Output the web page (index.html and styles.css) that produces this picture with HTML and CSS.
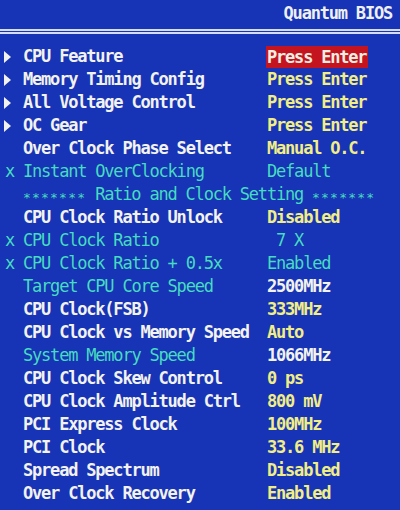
FILE: index.html
```html
<!DOCTYPE html>
<html>
<head>
<meta charset="utf-8">
<link rel="stylesheet" href="styles.css">
</head>
<body>
<div class="screen">
  <header class="topbar">
    <span class="brand">Quantum BIOS</span>
  </header>
  <div class="rule"></div>
  <ul class="menu">
    <li class="row"><span class="mark arrow"></span><span class="label">CPU Feature</span><span class="value sel">Press Enter</span></li>
    <li class="row"><span class="mark arrow"></span><span class="label">Memory Timing Config</span><span class="value">Press Enter</span></li>
    <li class="row"><span class="mark arrow"></span><span class="label">All Voltage Control</span><span class="value">Press Enter</span></li>
    <li class="row"><span class="mark arrow"></span><span class="label">OC Gear</span><span class="value">Press Enter</span></li>
    <li class="row"><span class="mark"></span><span class="label">Over Clock Phase Select</span><span class="value">Manual O.C.</span></li>
    <li class="row dim"><span class="mark">x</span><span class="label">Instant OverClocking</span><span class="value">Default</span></li>
    <li class="row dim"><span class="mark"></span><span class="section"><span class="stars">*******</span> Ratio and Clock Setting <span class="stars">*******</span></span></li>
    <li class="row"><span class="mark"></span><span class="label">CPU Clock Ratio Unlock</span><span class="value">Disabled</span></li>
    <li class="row dim"><span class="mark">x</span><span class="label">CPU Clock Ratio</span><span class="value indent">7 X</span></li>
    <li class="row dim"><span class="mark">x</span><span class="label">CPU Clock Ratio + 0.5x</span><span class="value">Enabled</span></li>
    <li class="row info"><span class="mark"></span><span class="label">Target CPU Core Speed</span><span class="value">2500MHz</span></li>
    <li class="row"><span class="mark"></span><span class="label">CPU Clock(FSB)</span><span class="value">333MHz</span></li>
    <li class="row"><span class="mark"></span><span class="label">CPU Clock vs Memory Speed</span><span class="value">Auto</span></li>
    <li class="row info"><span class="mark"></span><span class="label">System Memory Speed</span><span class="value">1066MHz</span></li>
    <li class="row"><span class="mark"></span><span class="label">CPU Clock Skew Control</span><span class="value">0 ps</span></li>
    <li class="row"><span class="mark"></span><span class="label">CPU Clock Amplitude Ctrl</span><span class="value">800 mV</span></li>
    <li class="row"><span class="mark"></span><span class="label">PCI Express Clock</span><span class="value">100MHz</span></li>
    <li class="row"><span class="mark"></span><span class="label">PCI Clock</span><span class="value">33.6 MHz</span></li>
    <li class="row"><span class="mark"></span><span class="label">Spread Spectrum</span><span class="value">Disabled</span></li>
    <li class="row"><span class="mark"></span><span class="label">Over Clock Recovery</span><span class="value">Enabled</span></li>
  </ul>
</div>
</body>
</html>
```
FILE: styles.css
```css
html, body {
  margin: 0;
  padding: 0;
  background: #1733b6;
}

.screen {
  width: 400px;
  height: 510px;
  overflow: hidden;
  background: #1733b6;
  font-family: "DejaVu Sans Mono", "Liberation Mono", monospace;
  font-weight: bold;
  font-size: 17px;
  letter-spacing: -1.2px;
  color: #f2f2ee;
}

.topbar {
  height: 29px;
  display: flex;
  justify-content: flex-end;
  align-items: center;
  padding-right: 8px;
  box-sizing: border-box;
}

.brand {
  color: #eef0f4;
  padding-bottom: 3px;
}

.rule {
  height: 0;
  border-top: 5px double #d6dcf2;
}

.menu {
  list-style: none;
  margin: 0;
  padding: 11px 0 0 0;
}

.row {
  display: grid;
  grid-template-columns: 23px 244px 1fr;
  align-items: center;
  height: 23px;
  line-height: 23px;
  white-space: pre;
}

.mark {
  display: flex;
  align-items: center;
  justify-content: center;
  height: 23px;
  color: #46dcc0;
  font-weight: normal;
  padding-right: 4px;
}

.arrow::before {
  content: "";
  display: block;
  width: 0;
  height: 0;
  border-top: 6px solid transparent;
  border-bottom: 6px solid transparent;
  border-left: 7px solid #f2f2ee;
  margin-left: -4px;
}

.value {
  color: #f2ee86;
  justify-self: start;
}

.value.sel {
  background: #c41420;
  color: #f4eee0;
  margin-left: -1px;
  padding: 0 2px 0 1px;
  height: 22px;
  line-height: 22px;
}

.value.indent {
  padding-left: 9px;
}

.dim .label,
.dim .value,
.dim .section {
  color: #46dcc0;
  font-weight: normal;
}

.info .label {
  color: #46dcc0;
  font-weight: normal;
}

.info .value {
  color: #f2f2ee;
}

.section {
  grid-column: 2 / 4;
}

.stars {
  font-size: 13px;
  letter-spacing: 1.2px;
  vertical-align: -2px;
}
```
